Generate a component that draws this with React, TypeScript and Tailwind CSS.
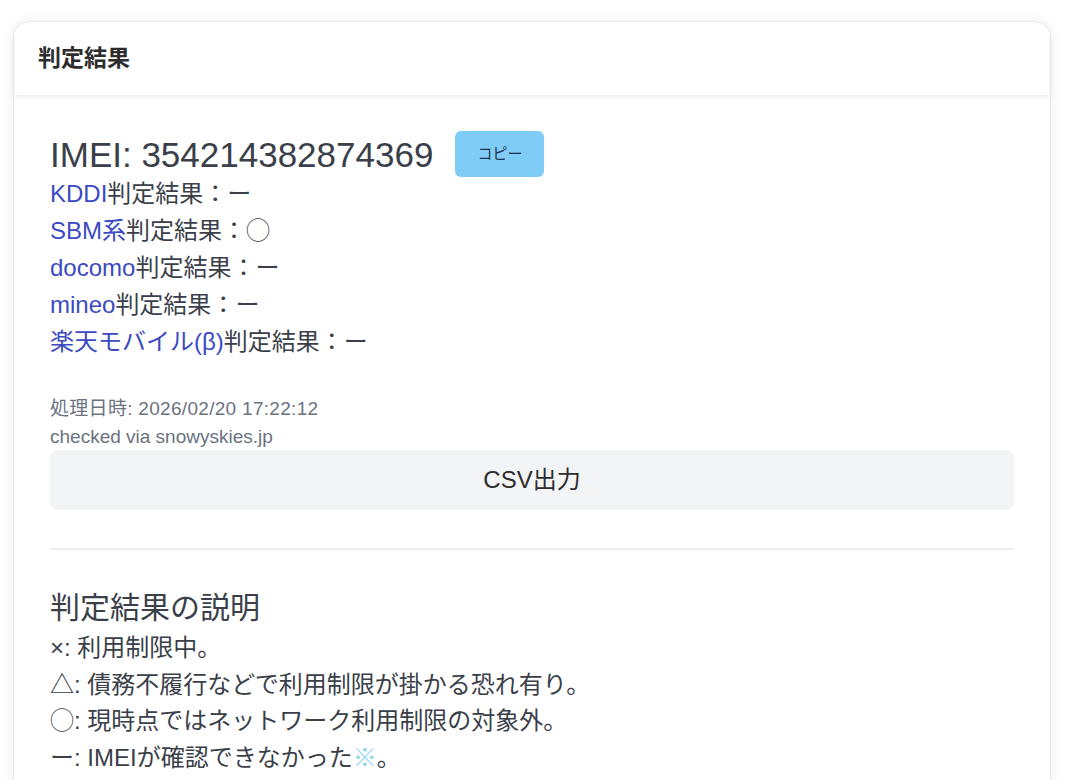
import React from "react";

const font = { fontFamily: '"Liberation Sans", "Noto Sans CJK JP", sans-serif' };

export default function App() {
  const results: { name: string; value: string }[] = [
    { name: "KDDI", value: "ー" },
    { name: "SBM系", value: "◯" },
    { name: "docomo", value: "ー" },
    { name: "mineo", value: "ー" },
    { name: "楽天モバイル(β)", value: "ー" },
  ];
  return (
    <div className="h-[780px] bg-white pt-[21px] pl-[13px] pr-[29px] overflow-hidden" style={font}>
      <div className="rounded-t-[16px] border border-[#ececec] bg-white shadow-[0_0_14px_rgba(0,0,0,0.07)] h-[800px]">
        <div className="h-[73px] flex items-center pl-[24px] rounded-t-[16px] bg-white shadow-[0_2px_4px_rgba(0,0,0,0.08)] relative">
          <h2 className="text-[23px] font-bold text-[#2d2d2d]">判定結果</h2>
        </div>
        <div className="px-[36px] pt-[36px]">
          <div className="flex items-center h-[46px]">
            <span className="text-[35px] text-[#3a3f4a] leading-none">IMEI: 354214382874369</span>
            <button className="ml-[22px] h-[46px] w-[89px] rounded-[6px] bg-[#7fcdf7] text-[15px] text-[#1e3350]">コピー</button>
          </div>
          <div className="text-[24px] leading-[37px] text-[#3a3f4a] -mt-[2px]">
            {results.map((r) => (
              <div key={r.name}>
                <a className="text-[#3b4ac2]">{r.name}</a>判定結果：{r.value}
              </div>
            ))}
          </div>
          <div className="mt-[35px] text-[19px] leading-[28px] text-[#6b7280]">
            <div className="tracking-[0.3px]">処理日時: 2026/02/20 17:22:12</div>
            <div>checked via snowyskies.jp</div>
          </div>
          <button className="w-full h-[60px] rounded-[8px] bg-[#f3f4f6] text-[24px] text-[#2d2d2d] -mt-[1px]">CSV出力</button>
          <div className="mt-[38px] h-[2px] bg-[#ededee]" />
          <h3 className="mt-[35px] text-[30px] leading-[45px] text-[#3a3f4a]">判定結果の説明</h3>
          <div className="text-[24px] leading-[36.5px] text-[#3a3f4a]">
            <div>×: 利用制限中。</div>
            <div>△: 債務不履行などで利用制限が掛かる恐れ有り。</div>
            <div>◯: 現時点ではネットワーク利用制限の対象外。</div>
            <div>
              ー: IMEIが確認できなかった<span className="text-[#8fd4f5]">※</span>。
            </div>
          </div>
        </div>
      </div>
    </div>
  );
}
